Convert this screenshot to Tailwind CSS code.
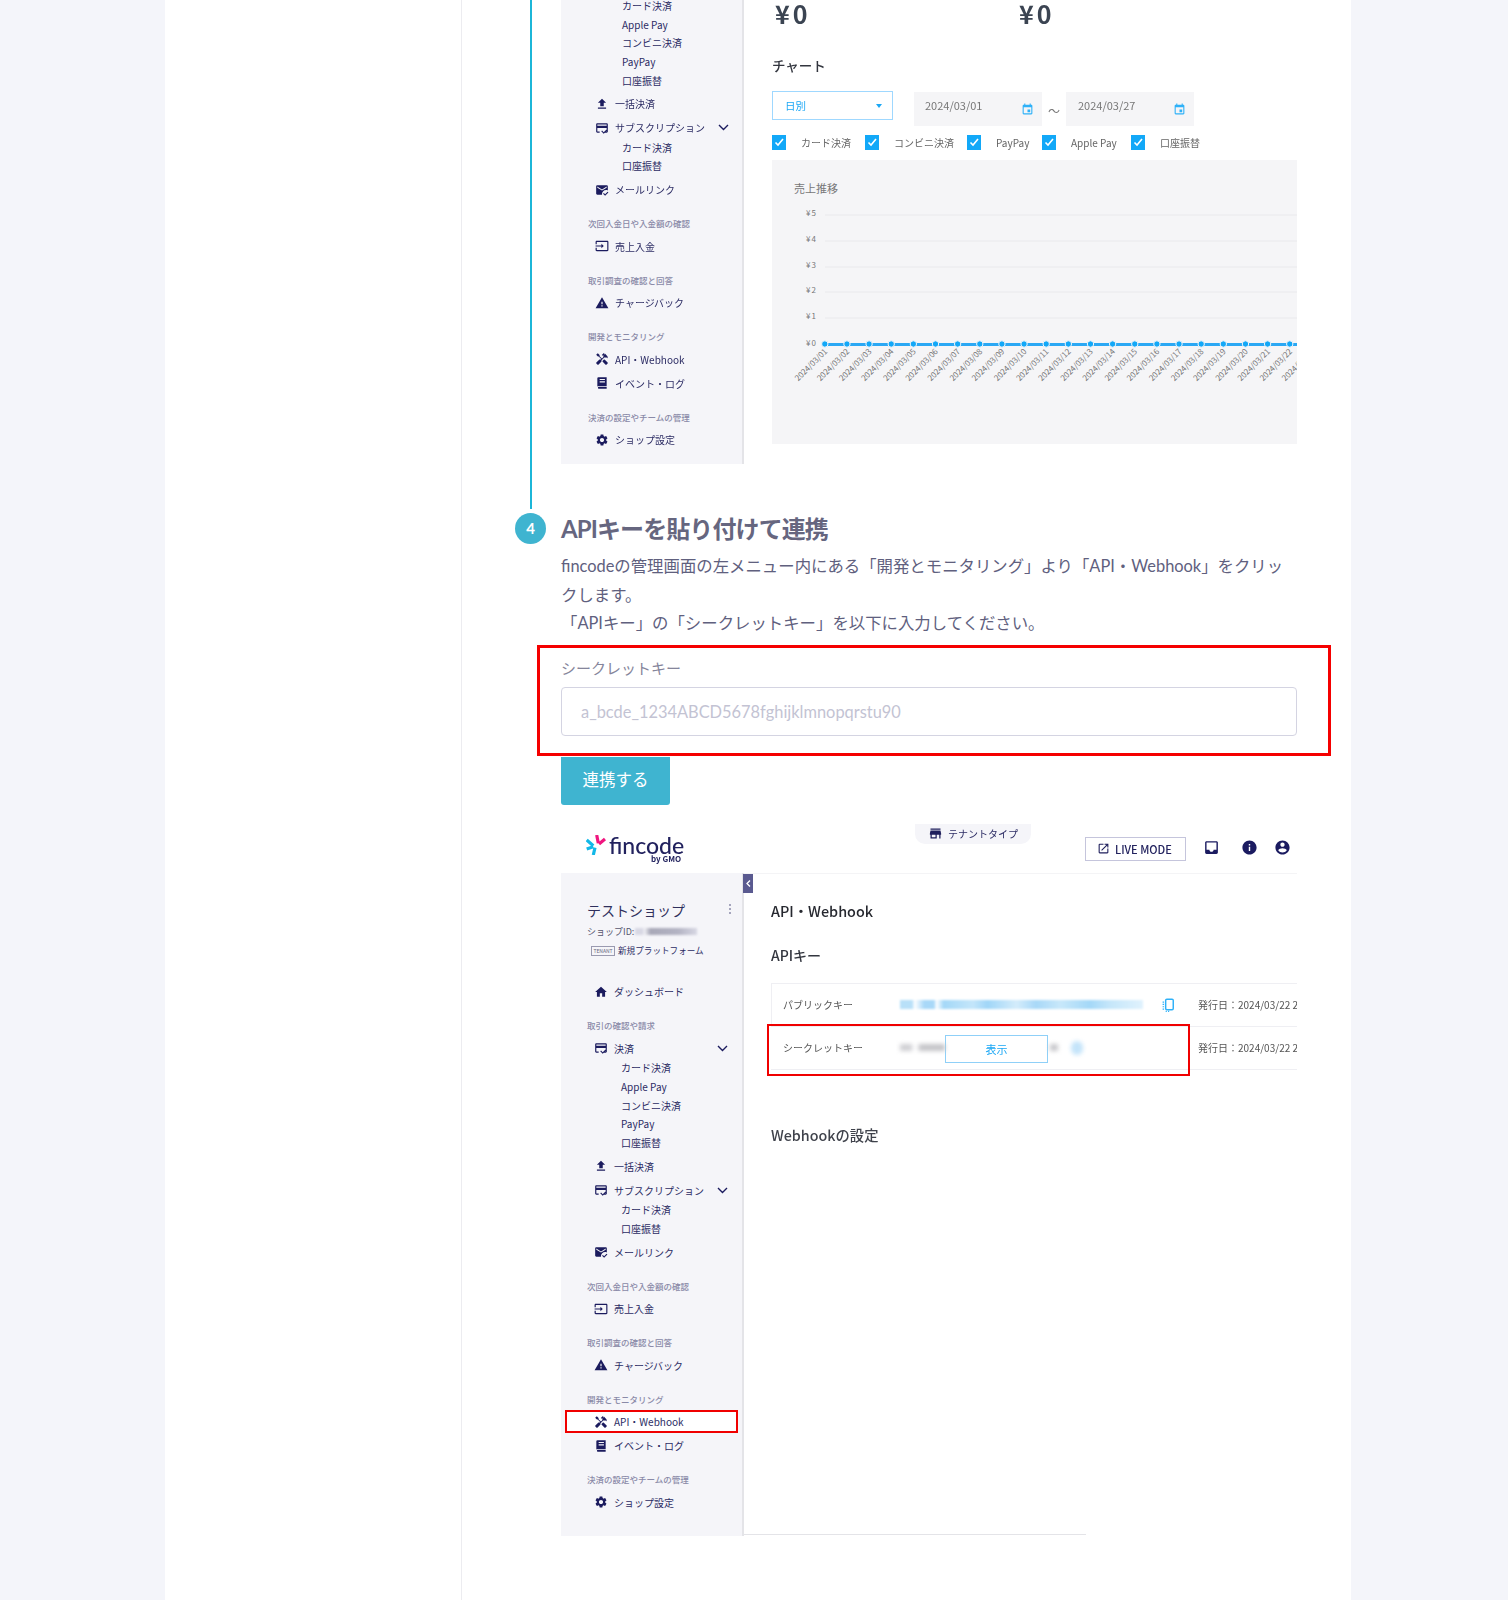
<!DOCTYPE html>
<html lang="ja">

<head>
    <meta charset="UTF-8">
    <meta name="viewport" content="width=device-width, initial-scale=1.0">
    <script src="https://cdn.jsdelivr.net/npm/@tailwindcss/browser@4"></script>
    <title>fincode 連携</title>
</head>

<body class="bg-[#f4f5fa] h-[1600px] overflow-hidden font-['Lato','Noto_Sans_CJK_JP',sans-serif]">
    <div class="ml-[165px] w-[1186px] h-[1600px] bg-white flex">
        <!-- Left column of the page, empty at this scroll position -->
        <aside class="w-[297px] shrink-0 border-r border-[#ececf0]"></aside>

        <main class="w-[889px] shrink-0">
            <!-- Step 3: end of the previous step, with its screenshot -->
            <section class="ml-[68px] w-[767px] h-[509px] border-l-2 border-[#1cb6d8] pl-[29px] overflow-hidden">
                <div class="w-[736px] h-[464px] flex font-['Noto_Sans_CJK_JP',sans-serif] blur-[0.45px]">
                    <div class="w-[183px] h-[464px] shrink-0 bg-[#f5f5f9] border-r-2 border-[#e4e4e8] overflow-hidden">
                        <div id="topNav" class="pl-[27px] -mt-[5.2px]"></div>
                    </div>
                    <div class="flex-1 min-w-0 pl-[28px]">
                        <div class="flex h-[26px] items-center text-[25px] font-bold text-[#3b4452] leading-[26px] tracking-[3px]">
                            <span class="w-[247px] pl-[3px]">¥0</span>
                            <span>¥0</span>
                        </div>
                        <h3 class="mt-[29px] h-[20px] flex items-center text-[13.5px] font-medium text-[#33363f]">チャート</h3>
                        <div class="mt-[16px] flex h-[35px] items-start">
                            <div class="w-[121px] h-[29px] border border-[#9fd8ff] flex items-center justify-between pl-[12px] pr-[10px] text-[10.5px] text-[#1ba7f5]">
                                <span>日別</span>
                                <span class="w-0 h-0 border-x-[3.5px] border-x-transparent border-t-[4px] border-t-[#1ba7f5]"></span>
                            </div>
                            <div class="mt-[1px] ml-[21px] w-[128px] h-[34px] bg-[#f5f5f7] flex pl-[11px] pr-[8px] text-[11px] text-[#777] justify-between">
                                <span class="mt-[5px]">2024/03/01</span>
                                <svg class="mt-[11px] w-[13px] h-[13px] fill-[#2eb1f8]" viewBox="0 0 24 24"><path d="M17 12h-5v5h5v-5zM16 1v2H8V1H6v2H5c-1.11 0-1.99.9-1.99 2L3 19a2 2 0 0 0 2 2h14c1.1 0 2-.9 2-2V5c0-1.1-.9-2-2-2h-1V1h-2zm3 18H5V8h14v11z"/></svg>
                            </div>
                            <span class="w-[24px] mt-[11px] text-center text-[12px] text-[#777]">～</span>
                            <div class="mt-[1px] w-[128px] h-[34px] bg-[#f5f5f7] flex pl-[12px] pr-[8px] text-[11px] text-[#777] justify-between">
                                <span class="mt-[5px]">2024/03/27</span>
                                <svg class="mt-[11px] w-[13px] h-[13px] fill-[#2eb1f8]" viewBox="0 0 24 24"><path d="M17 12h-5v5h5v-5zM16 1v2H8V1H6v2H5c-1.11 0-1.99.9-1.99 2L3 19a2 2 0 0 0 2 2h14c1.1 0 2-.9 2-2V5c0-1.1-.9-2-2-2h-1V1h-2zm3 18H5V8h14v11z"/></svg>
                            </div>
                        </div>
                        <!-- Payment type checkboxes -->
                        <div id="checks" class="mt-[8px] h-[16px] flex items-center text-[10px] text-[#666]"></div>
                        <!-- Sales chart -->
                        <div class="mt-[10px] h-[284px] bg-[#f5f5f7] overflow-hidden">
                            <p class="pt-[20px] pl-[22px] h-[28px] text-[11px] leading-[16px] text-[#777]">売上推移</p>
                            <svg id="chart" class="-mt-[28px]" width="525" height="284" viewBox="0 0 525 284"></svg>
                        </div>
                    </div>
                </div>
            </section>

            <!-- Step 4 -->
            <section class="mt-[4px] ml-[53px]">
                <div class="flex items-center h-[31px]">
                    <span class="w-[31px] h-[31px] rounded-full bg-[#3fb4d0] text-white text-[15px] font-bold flex items-center justify-center">4</span>
                    <h2 class="ml-[15px] text-[24px] font-bold text-[#66667f] tracking-[-0.9px]">APIキーを貼り付けて連携</h2>
                </div>
                <div class="ml-[46px] w-[736px]">
                    <p class="mt-[8px] text-[16.4px] leading-[28.6px] text-[#60607e]">fincodeの管理画面の左メニュー内にある「開発とモニタリング」より「API・Webhook」をクリックします。<br>「APIキー」の「シークレットキー」を以下に入力してください。</p>
                    <div class="relative mt-[14px]">
                        <label class="block h-[28px] pt-[4px] leading-[24px] text-[15px] text-[#85859b]">シークレットキー</label>
                        <input class="block mt-[7px] w-full h-[49px] px-[19px] border border-[#d4d4e2] rounded-[4px] text-[16.4px] placeholder:text-[#c3c3d3] outline-none" placeholder="a_bcde_1234ABCD5678fghijklmnopqrstu90">
                        <span class="absolute -left-[24px] -top-[7px] w-[794px] h-[111px] border-[3px] border-[#f50000]"></span>
                    </div>
                    <button class="mt-[21px] w-[109px] h-[48px] bg-[#3fb4d0] rounded-b-[3px] text-white text-[16.5px]">連携する</button>

                    <!-- fincode dashboard screenshot -->
                    <div class="relative mt-[20px] w-[736px] font-['Noto_Sans_CJK_JP',sans-serif] blur-[0.45px]">
                        <header class="relative h-[48px]">
                            <div class="absolute left-[25px] top-[10px] flex items-start">
                                <svg class="w-[20px] h-[20px]" viewBox="0 0 20 20" stroke-width="3.2" fill="none">
                                    <path stroke="#12b8e8" d="M.7 5 7.3 10.7M.7 14 7.3 11.7M7.3 20 9 12.7"/>
                                    <path stroke="#f0157f" d="M10.7 0 12.3 8.3M19 4 13 9"/>
                                </svg>
                                <span class="ml-[3px] text-[23px] font-['Lato',sans-serif] font-medium leading-[20px] text-[#22225e]">fincode</span>
                            </div>
                            <span class="absolute left-[90px] top-[30px] text-[8px] leading-[7px] font-bold text-[#22225e]">by GMO</span>
                            <div class="absolute left-[354px] -top-[1px] w-[116px] h-[20px] bg-[#f5f5f9] rounded-b-[10px] flex items-center pl-[13px] text-[10px] text-[#2c2c64]">
                                <svg class="w-[15px] h-[15px] fill-[#1f1f5c] mr-[5px]" viewBox="0 0 24 24"><path d="M20 4H4v2h16V4zm1 10v-2l-1-5H4l-1 5v2h1v6h10v-6h4v6h2v-6h1zm-9 4H6v-4h6v4z"/></svg>
                                テナントタイプ
                            </div>
                            <div class="absolute left-[524px] top-[12px] w-[101px] h-[24px] border border-[#c5c5dc] flex items-center pl-[11px] text-[11px] font-medium text-[#22225e]">
                                <svg class="w-[13px] h-[13px] fill-[#1f1f5c] mr-[5px]" viewBox="0 0 24 24"><path d="M19 19H5V5h7V3H5a2 2 0 0 0-2 2v14a2 2 0 0 0 2 2h14c1.1 0 2-.9 2-2v-7h-2v7zM14 3v2h3.59l-9.83 9.83 1.41 1.41L19 6.41V10h2V3h-7z"/></svg>
                                LIVE MODE
                            </div>
                            <div class="absolute left-[642px] top-[14px] flex gap-[17px] items-center">
                                <svg class="w-[17px] h-[17px] fill-[#1b1b60]" viewBox="0 0 24 24"><path d="M19 3H4.99c-1.11 0-1.98.89-1.98 2L3 19c0 1.1.88 2 1.99 2H19c1.1 0 2-.9 2-2V5c0-1.11-.9-2-2-2zm0 12h-4c0 1.66-1.35 3-3 3s-3-1.34-3-3H4.99V5H19v10z"/></svg>
                                <svg class="ml-[4px] w-[17px] h-[17px] fill-[#1b1b60]" viewBox="0 0 24 24"><path d="M12 2C6.48 2 2 6.48 2 12s4.48 10 10 10 10-4.48 10-10S17.52 2 12 2zm1 15h-2v-6h2v6zm0-8h-2V7h2v2z"/></svg>
                                <svg class="-ml-[1px] w-[17px] h-[17px] fill-[#1b1b60]" viewBox="0 0 24 24"><path d="M12 2C6.48 2 2 6.48 2 12s4.48 10 10 10 10-4.48 10-10S17.52 2 12 2zm0 3c1.66 0 3 1.34 3 3s-1.34 3-3 3-3-1.34-3-3 1.34-3 3-3zm0 14.2c-2.5 0-4.71-1.28-6-3.22.03-1.99 4-3.08 6-3.08 1.99 0 5.97 1.09 6 3.08-1.29 1.94-3.5 3.22-6 3.22z"/></svg>
                            </div>
                        </header>

                        <div class="flex h-[663px]">
                            <div class="relative w-[183px] shrink-0 bg-[#f5f5f9] border-r-2 border-[#e4e4e8] pl-[26px]">
                                <!-- Collapse tab -->
                                <span class="absolute -right-[11px] top-[1px] w-[10px] h-[19px] bg-[#5a5a90] text-white flex items-center justify-center">
                                    <svg class="w-[7px] h-[9px]" viewBox="0 0 7 9" fill="none" stroke="white" stroke-width="1.3"><path d="M5 1.5 2 4.5 5 7.5"/></svg>
                                </span>
                                <div class="pt-[26px] w-[150px] relative">
                                    <p class="h-[22px] text-[14px] leading-[22px] text-[#2f2f5c]">テストショップ</p>
                                    <span class="absolute right-[6px] top-[31px] flex flex-col gap-[2px]">
                                        <i class="w-[2px] h-[2px] rounded-full bg-[#8a8aa8]"></i>
                                        <i class="w-[2px] h-[2px] rounded-full bg-[#8a8aa8]"></i>
                                        <i class="w-[2px] h-[2px] rounded-full bg-[#8a8aa8]"></i>
                                    </span>
                                    <p class="mt-[3px] h-[16px] flex items-center text-[9px] text-[#55556e]">ショップID:<span class="ml-[1px] w-[62px] h-[7px] bg-[linear-gradient(90deg,#d8d8e4_0,#d8d8e4_12%,#f0f0f5_15%,#a8a8b8_25%,#b4b4c4_70%,#d8d8e4_100%)] blur-[1px]"></span></p>
                                    <p class="mt-[4px] h-[14px] flex items-center pl-[4px] text-[8.6px] text-[#2c2c64] whitespace-nowrap">
                                        <span class="w-[24px] h-[10px] mr-[3px] border border-[#9a9ab0] text-[5px] leading-[8px] text-center text-[#66667e]">TENANT</span>
                                        新規プラットフォーム
                                    </p>
                                </div>
                                <div id="bottomNav" class="mt-[22px]"></div>
                            </div>

                            <div class="flex-1 min-w-0 border-t border-[#f4f4f6]">
                                <div class="relative pl-[27px] h-[661px] border-b border-b-[#e4e4e8] mr-[211px]">
                                    <h3 class="pt-[26px] h-[48px] leading-[22px] text-[14.4px] font-medium text-[#26282f] whitespace-nowrap">API・Webhook</h3>
                                    <h4 class="mt-[22px] h-[22px] leading-[22px] text-[14px] font-medium text-[#33363f]">APIキー</h4>
                                    <div class="mt-[17px] w-[526px] text-[10px] text-[#555]">
                                        <div class="h-[44px] flex items-center border-y border-l border-[#efeff3] pl-[11px] overflow-hidden whitespace-nowrap">
                                            <span class="w-[117px] shrink-0">パブリックキー</span>
                                            <span class="w-[243px] h-[9px] shrink-0 bg-[linear-gradient(90deg,#b8e0f8_0,#b8e0f8_5%,#fff_6%,#a8d8f8_10%,#a8d8f8_14%,#fff_15%,#a4d8f8_18%,#c4e6fa_30%,#a0d6f8_36%,#d4ecfb_48%,#a8d8f8_56%,#c8e8fa_66%,#a4d8f8_78%,#c4e6fa_86%,#e0f2fd_100%)] blur-[1px]"></span>
                                            <svg class="ml-[18px] shrink-0 w-[14px] h-[14px] fill-none stroke-[#2eb1f8] stroke-[2.5]" viewBox="0 0 24 24"><rect x="8" y="2" width="13" height="18" rx="2"/><path d="M4 6v14M8 23h8" stroke-dasharray="2 2"/></svg>
                                            <span class="ml-[23px] shrink-0">発行日：2024/03/22 2</span>
                                        </div>
                                        <div class="h-[43px] flex items-center border-b border-[#efeff3] pl-[12px] overflow-hidden whitespace-nowrap">
                                            <span class="w-[117px] shrink-0">シークレットキー</span>
                                            <span class="w-[45px] shrink-0 h-[7px] bg-[linear-gradient(90deg,#cfcfd3_0,#cfcfd3_25%,#fff_30%,#fff_38%,#c4c4c8_44%,#c4c4c8_100%)] blur-[2px]"></span>
                                            <span class="mt-[2px] w-[103px] h-[28px] shrink-0 bg-white border border-[#8fd0f8] flex items-center justify-center text-[11px] text-[#1ba7f5]">表示</span>
                                            <span class="ml-[2px] w-[8px] shrink-0 h-[7px] bg-[#c8c8cc] blur-[2px]"></span>
                                            <span class="ml-[13px] w-[12px] h-[14px] shrink-0 rounded-full bg-[#c4e4fa] blur-[2px]"></span>
                                            <span class="ml-[115px] shrink-0">発行日：2024/03/22 2</span>
                                        </div>
                                    </div>
                                    <h4 class="mt-[54px] h-[22px] leading-[22px] text-[14.3px] font-medium text-[#3f424b] whitespace-nowrap">Webhookの設定</h4>
                                    <!-- Highlight around the secret key row -->
                                    <span class="absolute left-[23px] top-[150px] w-[423px] h-[52px] border-2 border-[#f00000]"></span>
                                </div>
                            </div>
                        </div>
                    </div>
                </div>
            </section>
        </main>
    </div>

    <script>
        // Material icon paths used by the screenshot's side menu
        const icons = {
            home: "M10 20v-6h4v6h5v-8h3L12 3 2 12h3v8z",
            card: "M20 4H4c-1.11 0-2 .89-2 2v12c0 1.11.89 2 2 2h4v-2H4v-6h16v6h-4v2h4c1.11 0 2-.89 2-2V6c0-1.11-.89-2-2-2zm0 4H4V6h16v2zm-5.07 11.17l-2.83-2.83-1.41 1.41L14.93 22 22 14.93l-1.41-1.41-5.66 5.65z",
            upload: "M9 16h6v-6h4l-7-7-7 7h4zm-4 2h14v2H5z",
            mail: "M12 19c0-3.87 3.13-7 7-7 1.08 0 2.09.25 3 .68V6c0-1.1-.9-2-2-2H4c-1.1 0-2 .9-2 2v12c0 1.1.9 2 2 2h8.08c-.05-.33-.08-.66-.08-1zM4 6l8 5 8-5v2l-8 5-8-5V6zm13.34 16l-3.54-3.54 1.41-1.41 2.12 2.12 4.24-4.24L23 16.34 17.34 22z",
            input: "M21 3.01H3c-1.1 0-2 .9-2 2V9h2V4.99h18v14.03H3V15H1v4.01c0 1.1.9 1.98 2 1.98h18c1.1 0 2-.88 2-1.98v-14c0-1.11-.9-2-2-2zM11 16l4-4-4-4v3H1v2h10v3z",
            warning: "M1 21h22L12 2 1 21zm12-3h-2v-2h2v2zm0-4h-2v-4h2v4z",
            tools: "M21.67 18.17l-5.3-5.3h-.99l-2.54 2.54v.99l5.3 5.3c.39.39 1.02.39 1.41 0l2.12-2.12c.39-.38.39-1.02 0-1.41zM17.34 10.19l1.41-1.41 2.12 2.12c1.17-1.17 1.17-3.07 0-4.24l-3.54-3.54-1.41 1.41V2.34l-.7-.71-3.54 3.54.71.71h2.83l-1.41 1.41 1.06 1.06-2.89 2.89-4.13-4.13V5.06L4.83 2.04 2 4.87l3.03 3.03h1.41l4.13 4.13-.85.85H7.6l-5.3 5.3c-.39.39-.39 1.02 0 1.41l2.12 2.12c.39.39 1.02.39 1.41 0l5.3-5.3v-2.12l5.15-5.15 1.06 1.05z",
            log: "M6 2h14v15H6a3 3 0 0 0-2 .8V4a2 2 0 0 1 2-2zm2 3v2h9V5H8zm0 4v2h9V9H8zM6 18.5h14V22H6a2 2 0 0 1 0-3.5z",
            gear: "M19.14 12.94c.04-.3.06-.61.06-.94 0-.32-.02-.64-.07-.94l2.03-1.58c.18-.14.23-.41.12-.61l-1.92-3.32c-.12-.22-.37-.29-.59-.22l-2.39.96c-.5-.38-1.03-.7-1.62-.94l-.36-2.54c-.04-.24-.24-.41-.48-.41h-3.84c-.24 0-.43.17-.47.41l-.36 2.54c-.59.24-1.13.57-1.62.94l-2.39-.96c-.22-.08-.47 0-.59.22L2.74 8.87c-.12.21-.08.47.12.61l2.03 1.58c-.05.3-.09.63-.09.94s.02.64.07.94l-2.03 1.58c-.18.14-.23.41-.12.61l1.92 3.32c.12.22.37.29.59.22l2.39-.96c.5.38 1.03.7 1.62.94l.36 2.54c.05.24.24.41.48.41h3.84c.24 0 .44-.17.47-.41l.36-2.54c.59-.24 1.13-.56 1.62-.94l2.39.96c.22.08.47 0 .59-.22l1.92-3.32c.12-.22.07-.47-.12-.61l-2.01-1.58zM12 15.6c-1.98 0-3.6-1.62-3.6-3.6s1.62-3.6 3.6-3.6 3.6 1.62 3.6 3.6-1.62 3.6-3.6 3.6z"
        };

        const item = (icon, text, chevron, boxed) => `
            <div class="relative w-[141px] h-[24px] flex items-center pl-[7px] text-[10px] text-[#2c2c64] whitespace-nowrap">
                ${boxed ? '<span class="absolute -left-[22px] top-[0px] w-[173px] h-[23px] bg-white border-2 border-[#f00000]"></span>' : ''}
                <svg class="relative w-[14px] h-[14px] fill-[#1b1b5e] mr-[6px] shrink-0" viewBox="0 0 24 24"><path d="${icons[icon]}"/></svg>
                <span class="relative">${text}</span>
                ${chevron ? '<svg class="ml-auto w-[11px] h-[7px] fill-none stroke-[#1b1b5e] stroke-[1.4]" viewBox="0 0 11 7"><path d="M1 1l4.5 4.5L10 1"/></svg>' : ''}
            </div>`;

        const subs = (names) => `
            <div class="-mt-[1px] pb-[1.5px]">
                ${names.map(n => `<div class="h-[18.7px] leading-[18.7px] pl-[34px] text-[10px] text-[#2c2c64]">${n}</div>`).join("")}
            </div>`;

        const label = (text) => `<p class="mt-[14.5px] mb-[4px] h-[14px] leading-[14px] text-[8.5px] font-medium text-[#8a8aa8] whitespace-nowrap">${text}</p>`;

        const rest = `
            ${item("upload", "一括決済")}
            ${item("card", "サブスクリプション", true)}
            ${subs(["カード決済", "口座振替"])}
            ${item("mail", "メールリンク")}
            ${label("次回入金日や入金額の確認")}
            ${item("input", "売上入金")}
            ${label("取引調査の確認と回答")}
            ${item("warning", "チャージバック")}
            ${label("開発とモニタリング")}`;

        const tail = `
            ${item("log", "イベント・ログ")}
            ${label("決済の設定やチームの管理")}
            ${item("gear", "ショップ設定")}`;

        const payments = ["カード決済", "Apple Pay", "コンビニ決済", "PayPay", "口座振替"];

        document.getElementById("topNav").innerHTML =
            `<div class="mt-[2px]">${subs(payments)}</div>` + rest + item("tools", "API・Webhook") + tail;

        document.getElementById("bottomNav").innerHTML =
            item("home", "ダッシュボード") + label("取引の確認や請求") +
            item("card", "決済", true) + subs(payments) + rest + item("tools", "API・Webhook", false, true) + tail;

        // Checkbox row above the chart: [label, width of one checkbox + label]
        const checks = [["カード決済", 93], ["コンビニ決済", 102], ["PayPay", 75], ["Apple Pay", 89], ["口座振替", 80]];
        document.getElementById("checks").innerHTML = checks.map(([name, width]) => `
            <div class="flex items-center shrink-0" style="width:${width}px">
                <span class="w-[14px] h-[15px] bg-[#12a8f8] flex items-center justify-center">
                    <svg class="w-[10px] h-[10px] fill-none stroke-white stroke-[1.6]" viewBox="0 0 10 10"><path d="M1.5 5.5l2.5 2.5 5-6"/></svg>
                </span>
                <span class="ml-[15px] whitespace-nowrap">${name}</span>
            </div>`).join("");

        // Sales chart, drawn in panel coordinates (panel origin is 772,160)
        const svgParts = [];
        const yLabels = [[5, 55], [4, 81], [3, 107], [2, 132], [1, 158]];
        yLabels.forEach(([n, y]) => {
            svgParts.push(`<line x1="53" x2="525" y1="${y}" y2="${y}" stroke="#e9e9ec"/>`);
            svgParts.push(`<text x="45" y="${y + 1}" text-anchor="end" font-size="8" letter-spacing="1" fill="#777">¥${n}</text>`);
        });
        svgParts.push(`<text x="45" y="186" text-anchor="end" font-size="8" letter-spacing="1" fill="#777">¥0</text>`);
        svgParts.push(`<line x1="53" x2="525" y1="184.5" y2="184.5" stroke="#2ba8f4" stroke-width="3"/>`);
        for (let i = 0; i < 24; i++) {
            const x = 52.8 + i * 22.14;
            const day = String(i + 1).padStart(2, "0");
            svgParts.push(`<circle cx="${x}" cy="184" r="3.2" fill="#12a8f8" stroke="#f5f5f7" stroke-width="1"/>`);
            svgParts.push(`<text x="${x + 3}" y="192" text-anchor="end" font-size="8" fill="#777" transform="rotate(-45 ${x + 3} 192)">2024/03/${day}</text>`);
        }
        document.getElementById("chart").innerHTML = svgParts.join("");
    </script>
</body>

</html>
